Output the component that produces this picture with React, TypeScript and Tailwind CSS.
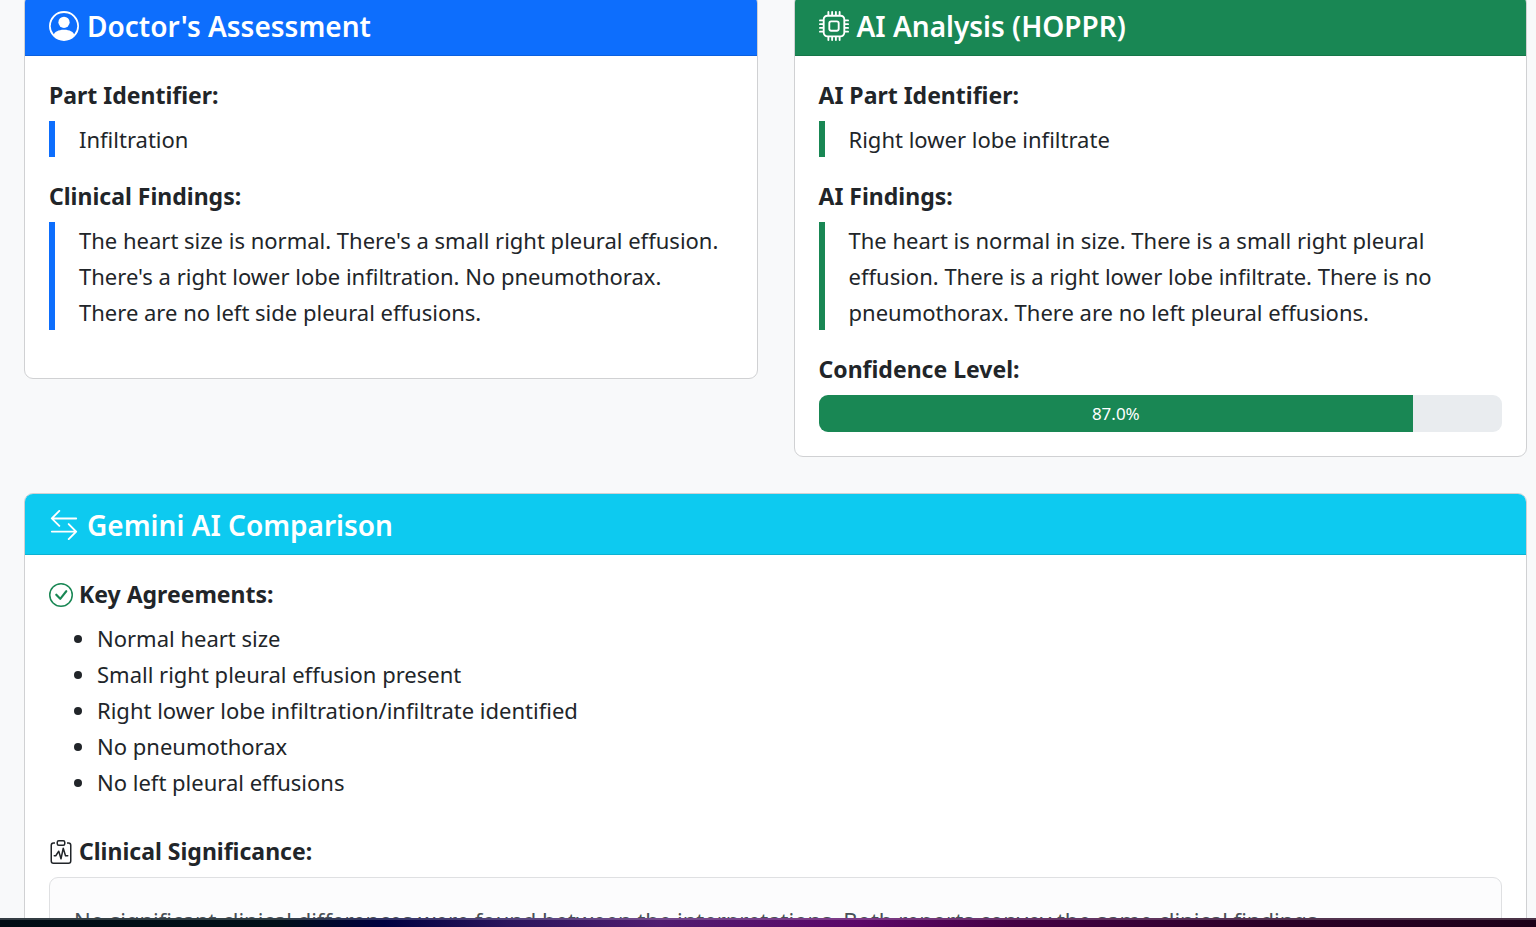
import type { ReactNode } from "react";
import {
  BsArrowLeftRight,
  BsCheckCircle,
  BsClipboardPulse,
  BsCpu,
  BsPersonCircle,
} from "react-icons/bs";

const agreements = [
  "Normal heart size",
  "Small right pleural effusion present",
  "Right lower lobe infiltration/infiltrate identified",
  "No pneumothorax",
  "No left pleural effusions",
];

const confidence = 87;

type CardProps = {
  title: string;
  icon: ReactNode;
  headerClass: string;
  children: ReactNode;
};

function Card({ title, icon, headerClass, children }: CardProps) {
  return (
    <section className="overflow-hidden rounded-[9px] border border-[#d0d1d3] bg-white">
      <header className={`border-b px-6 pt-[13px] pb-[11px] text-white ${headerClass}`}>
        <h2 className="flex items-center gap-2 text-[28px] leading-9 font-semibold">
          {icon}
          {title}
        </h2>
      </header>
      <div className="p-6">{children}</div>
    </section>
  );
}

function Label({ icon, children }: { icon?: ReactNode; children: ReactNode }) {
  return (
    <h3 className="mb-2.5 flex items-center gap-1.5 text-[23px] leading-[31px] font-bold">
      {icon}
      {children}
    </h3>
  );
}

function Quote({ barClass, children }: { barClass: string; children: ReactNode }) {
  return <p className={`mb-6 border-l-6 pr-3 pl-6 leading-9 ${barClass}`}>{children}</p>;
}

export default function App() {
  return (
    <div className="h-screen overflow-hidden bg-[#f8f9fa] font-['Noto_Sans','Open_Sans',sans-serif] text-[22px] text-[#212529] [font-variant-ligatures:none]">
      <main className="-mt-1.5 pr-[9px] pl-6">
        <div className="mb-9 grid grid-cols-2 items-start gap-9">
          <Card
            title="Doctor's Assessment"
            icon={<BsPersonCircle className="size-[30px] shrink-0" />}
            headerClass="border-[#0b60df] bg-[#0d6efd]"
          >
            <Label>Part Identifier:</Label>
            <Quote barClass="border-[#0d6efd]">Infiltration</Quote>
            <Label>Clinical Findings:</Label>
            <Quote barClass="border-[#0d6efd]">
              The heart size is normal. There's a small right pleural effusion. There's a right
              lower lobe infiltration. No pneumothorax. There are no left side pleural effusions.
            </Quote>
          </Card>
          <Card
            title="AI Analysis (HOPPR)"
            icon={<BsCpu className="size-[30px] shrink-0" />}
            headerClass="border-[#167649] bg-[#198754]"
          >
            <Label>AI Part Identifier:</Label>
            <Quote barClass="border-[#198754]">Right lower lobe infiltrate</Quote>
            <Label>AI Findings:</Label>
            <Quote barClass="border-[#198754]">
              The heart is normal in size. There is a small right pleural effusion. There is a right
              lower lobe infiltrate. There is no pneumothorax. There are no left pleural effusions.
            </Quote>
            <Label>Confidence Level:</Label>
            <div
              role="progressbar"
              aria-label="Confidence Level"
              aria-valuenow={confidence}
              aria-valuemin={0}
              aria-valuemax={100}
              className="h-[37px] overflow-hidden rounded-[9px] bg-[#e9ecef]"
            >
              <div
                className="flex h-full items-center justify-center bg-[#198754] text-[17px] text-white"
                style={{ width: `${confidence}%` }}
              >
                {confidence.toFixed(1)}%
              </div>
            </div>
          </Card>
        </div>
        <Card
          title="Gemini AI Comparison"
          icon={<BsArrowLeftRight className="size-[30px] shrink-0" />}
          headerClass="border-[#0cb2d2] bg-[#0dcaf0]"
        >
          <Label icon={<BsCheckCircle className="size-6 shrink-0 text-[#198754]" />}>
            Key Agreements:
          </Label>
          <ul className="mb-9 list-disc pl-12 leading-9">
            {agreements.map((item) => (
              <li key={item}>{item}</li>
            ))}
          </ul>
          <Label icon={<BsClipboardPulse className="size-6 shrink-0" />}>
            Clinical Significance:
          </Label>
          <div className="rounded-[9px] border border-[#dfe0e2] bg-[#fcfcfd] p-6 leading-9 text-[#495057]">
            No significant clinical differences were found between the interpretations. Both reports
            convey the same clinical findings.
          </div>
        </Card>
      </main>
      <div className="fixed inset-x-0 bottom-0 h-[9px] bg-[linear-gradient(90deg,#000c14_0%,#001018_18%,#000040_25%,#2a155c_33%,#501c70_43%,#5c0668_56%,#440044_66%,#2c0028_82%,#1c0018_100%)]">
        <div className="h-0.5 bg-white/20" />
      </div>
    </div>
  );
}
